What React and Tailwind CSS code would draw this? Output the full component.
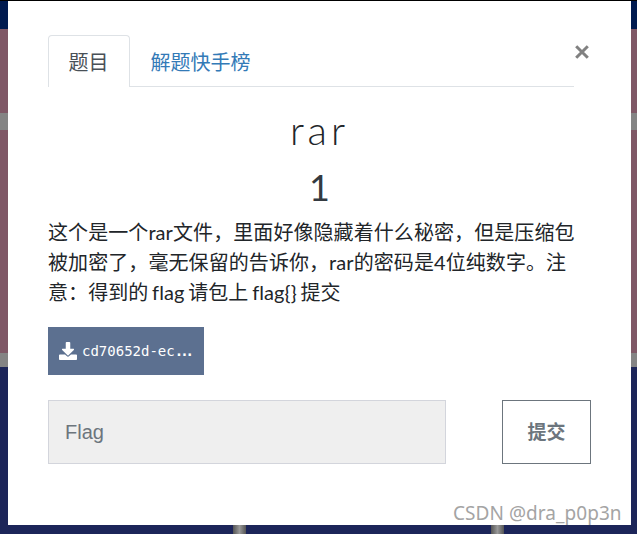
import React from "react";

const cjk = '"Lato","Noto Sans CJK SC",sans-serif';

export default function App() {
  return (
    <div className="relative w-[637px] h-[534px] overflow-hidden bg-[#1c2559]" style={{ fontFamily: cjk }}>
      {/* backdrop bands */}
      <div className="flex flex-col h-full">
        <div className="h-px bg-black" />
        <div className="h-[28px] bg-[#001a4f]" />
        <div className="h-[84px] bg-[#7f5866]" />
        <div className="h-[17px] bg-[#848484]" />
        <div className="h-[223px] bg-[#7f5866]" />
        <div className="h-[14px] bg-[#848484]" />
        <div className="flex-1 bg-[#1c2559] flex items-end">
          <div className="h-[9px] w-full flex">
            <div className="w-[233px]" />
            <div className="w-[13px] bg-gradient-to-r from-[#555] via-[#999] to-[#555]" />
            <div className="w-[245px]" />
            <div className="w-[13px] bg-gradient-to-r from-[#555] via-[#999] to-[#555]" />
          </div>
        </div>
      </div>

      {/* modal */}
      <div className="absolute left-[8px] top-[1px] w-[623px] h-[524px] bg-white pl-[40px] pr-[40px] pt-[34px]">
        <div className="mr-[17px] flex border-b border-[#dee2e6] h-[52px]">
          <div className="w-[82px] h-[52px] border border-b-0 border-[#dee2e6] rounded-t-[4px] bg-white text-[#495057] text-[20px] pr-[1px] flex items-center justify-center">
            题目
          </div>
          <div className="pl-[20.5px] pt-[2px] h-[51px] text-[#337ab7] text-[20px] flex items-center">解题快手榜</div>
        </div>
        <button className="absolute left-[566px] top-[41px] w-[16px] h-[20px] flex items-center justify-center">
          <svg width="14" height="14" viewBox="0 0 14 14">
            <path d="M1.2 1.2 L12.8 12.8 M12.8 1.2 L1.2 12.8" stroke="#818181" strokeWidth="3" />
          </svg>
        </button>

        <h3 className="mt-[19px] text-center text-[#212529] text-[40px] leading-[48px] tracking-[4px] font-light">rar</h3>
        <h4 className="mt-[12px] text-center text-[#343a40] text-[36px] leading-[43px] font-normal">1</h4>
        <p className="mt-[8px] text-[#212529] text-[20px] leading-[30px] tracking-[0.08px] [word-spacing:-1.5px]">
          这个是一个rar文件，里面好像隐藏着什么秘密，但是压缩包被加密了，毫无保留的告诉你，rar的密码是4位纯数字。注意：得到的 flag 请包上 flag{"{}"} 提交
        </p>

        <div className="mt-[20px] w-[156px] h-[48px] bg-[#5c7090] text-white flex items-center pl-[11px]">
          <svg width="18" height="18" viewBox="0 0 512 512" fill="white">
            <path d="M216 0h80c13.300 0 24 10.700 24 24v168h87.700c17.800 0 26.700 21.500 14.100 34.100L269.700 378.300c-7.500 7.500-19.800 7.500-27.300 0L90.100 226.100c-12.600-12.600-3.700-34.100 14.100-34.100H192V24c0-13.300 10.700-24 24-24zm296 376v112c0 13.300-10.700 24-24 24H24c-13.300 0-24-10.700-24-24V376c0-13.300 10.700-24 24-24h146.700l49 49c20.100 20.100 52.500 20.100 72.600 0l49-49H488c13.300 0 24 10.700 24 24z" />
          </svg>
          <span className="ml-[5px] text-[14px]" style={{ fontFamily: '"DejaVu Sans Mono",monospace' }}>
            cd70652d-ec<span className="font-bold tracking-[-3px]">...</span>
          </span>
        </div>

        <div className="mt-[25px] flex justify-between">
          <div className="w-[398px] h-[64px] bg-[#efefef] border border-[#d3d5dc] flex items-center pl-[16px] text-[20px] text-[#6c757d]" style={{ fontFamily: '"Liberation Sans",sans-serif' }}>
            Flag
          </div>
          <button className="w-[89px] h-[64px] border border-[#6c757d] bg-white text-[#6c757d] text-[19px] font-bold pb-[1px]" style={{ fontFamily: '"Noto Sans CJK SC",sans-serif' }}>
            提交
          </button>
        </div>

        <div className="absolute left-[445px] top-[498px] text-[19px] leading-[28px] tracking-[0.05px] text-[#a4a4a4] whitespace-nowrap" style={{ fontFamily: '"Noto Sans",sans-serif' }}>
          CSDN @dra_p0p3n
        </div>
      </div>
    </div>
  );
}
